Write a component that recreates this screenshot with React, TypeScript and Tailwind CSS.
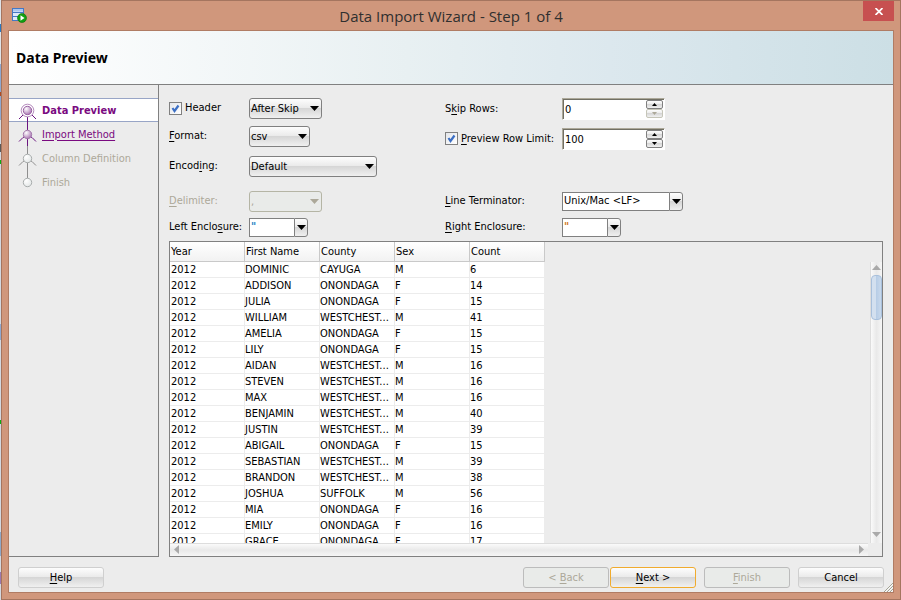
import React, { useState } from "react";

const rows: [string, string, string, string, string][] = [
  ["2012", "DOMINIC", "CAYUGA", "M", "6"],
  ["2012", "ADDISON", "ONONDAGA", "F", "14"],
  ["2012", "JULIA", "ONONDAGA", "F", "15"],
  ["2012", "WILLIAM", "WESTCHEST...", "M", "41"],
  ["2012", "AMELIA", "ONONDAGA", "F", "15"],
  ["2012", "LILY", "ONONDAGA", "F", "15"],
  ["2012", "AIDAN", "WESTCHEST...", "M", "16"],
  ["2012", "STEVEN", "WESTCHEST...", "M", "16"],
  ["2012", "MAX", "WESTCHEST...", "M", "16"],
  ["2012", "BENJAMIN", "WESTCHEST...", "M", "40"],
  ["2012", "JUSTIN", "WESTCHEST...", "M", "39"],
  ["2012", "ABIGAIL", "ONONDAGA", "F", "15"],
  ["2012", "SEBASTIAN", "WESTCHEST...", "M", "39"],
  ["2012", "BRANDON", "WESTCHEST...", "M", "38"],
  ["2012", "JOSHUA", "SUFFOLK", "M", "56"],
  ["2012", "MIA", "ONONDAGA", "F", "16"],
  ["2012", "EMILY", "ONONDAGA", "F", "16"],
  ["2012", "GRACE", "ONONDAGA", "F", "17"],
];

const glossy = "bg-[linear-gradient(to_bottom,#fdfdfd_0%,#ebebeb_45%,#d6d6d6_50%,#f0f0f0_100%)]";

/** Caption with its keyboard mnemonic underlined. */
function Mnemonic({ text, at }: { text: string; at: number }) {
  return (
    <>
      {text.slice(0, at)}
      <span className="underline underline-offset-2">{text[at]}</span>
      {text.slice(at + 1)}
    </>
  );
}

function Arrow({ up = false, small = false, className = "" }: { up?: boolean; small?: boolean; className?: string }) {
  return (
    <svg
      viewBox="0 0 9 5"
      className={`${small ? "h-[3px] w-[5px]" : "h-[5px] w-[9px]"} ${className}`}
      fill="currentColor"
      aria-hidden="true"
    >
      <path d={up ? "M0 5L4.5 0L9 5Z" : "M0 0H9L4.5 5Z"} />
    </svg>
  );
}

function Select({ id, value, width, disabled = false }: { id: string; value: string; width: string; disabled?: boolean }) {
  return (
    <span className={`relative inline-flex ${width}`}>
      <select
        id={id}
        disabled={disabled}
        defaultValue={value}
        className={`h-[21px] w-full appearance-none rounded-[3px] border pt-0.5 pr-4 pl-px opacity-100 ${
          disabled ? "border-[#b5b5a5] bg-[#e9ebe9] text-[#aca899]" : `border-[#808080] text-black ${glossy}`
        }`}
      >
        <option>{value}</option>
      </select>
      <Arrow className={`pointer-events-none absolute top-2 right-[3px] ${disabled ? "text-[#aca899]" : "text-black"}`} />
    </span>
  );
}

function Combo({ id, value, width, color = "text-black" }: { id: string; value: string; width: string; color?: string }) {
  return (
    <span className={`flex h-[19px] ${width}`}>
      <input id={id} defaultValue={value} className={`min-w-0 flex-1 border border-r-0 border-[#808080] bg-white px-px ${color}`} />
      <button type="button" aria-label="Show choices" className={`flex w-3.5 items-center justify-center rounded-r-[3px] border border-[#808080] ${glossy}`}>
        <Arrow />
      </button>
    </span>
  );
}

function Spinner({ id, initial }: { id: string; initial: number }) {
  const [value, setValue] = useState(initial);
  return (
    <span className="flex h-[22px] w-[103px] self-end border border-t-[#aca899] border-r-white border-b-white border-l-[#aca899] bg-white shadow-[inset_1px_1px_0_#716f64]">
      <input
        id={id}
        value={value}
        onChange={(e) => setValue(Number(e.target.value) || 0)}
        className="min-w-0 flex-1 bg-transparent pt-px pl-0.5"
      />
      <span className="flex w-[18px] flex-col pt-px pr-px">
        <button
          type="button"
          aria-label="Increase"
          onClick={() => setValue(value + 1)}
          className={`flex h-[9px] items-center justify-center rounded-[2px] border border-[#808080] ${glossy}`}
        >
          <Arrow up small />
        </button>
        <button
          type="button"
          aria-label="Decrease"
          disabled={value === 0}
          onClick={() => setValue(value - 1)}
          className={`flex h-[9px] items-center justify-center rounded-[2px] border border-[#808080] disabled:border-[#c5c5b8] disabled:text-[#aca899] ${glossy}`}
        >
          <Arrow small />
        </button>
      </span>
    </span>
  );
}

function Check({ id }: { id: string }) {
  return (
    <span className="relative inline-flex">
      <input
        id={id}
        type="checkbox"
        defaultChecked
        className="peer size-[13px] appearance-none border border-[#808080] bg-[linear-gradient(135deg,#e4e6ea,#ffffff)]"
      />
      <svg viewBox="0 0 13 13" className="pointer-events-none absolute inset-0 hidden size-[13px] peer-checked:block" aria-hidden="true">
        <path d="M3.5 6L5.5 9L9.5 3.5" fill="none" stroke="#3c6fc4" strokeWidth="2.2" />
      </svg>
    </span>
  );
}

function StepNode({ kind }: { kind: "current" | "next" | "later" | "last" }) {
  const purple = kind === "current" || kind === "next";
  const line = purple ? "#6b1480" : "#8e8e8e";
  return (
    <svg viewBox="0 0 22 24" className="h-6 w-[22px] shrink-0 overflow-visible" fill="none" aria-hidden="true">
      <defs>
        <radialGradient id={`node-${kind}`} cx="35%" cy="30%" r="75%">
          <stop offset="0" stopColor="#ffffff" />
          <stop offset="1" stopColor={purple ? "#a772b0" : "#e2e6e6"} />
        </radialGradient>
      </defs>
      {kind === "current" && (
        <>
          <path d="M10.5 19V32M6.5 16.5L2 21M14.5 16.5L19 21" stroke={line} />
          <circle cx="10.5" cy="12.5" r="6.3" fill="#ffffff" stroke="#b58bbd" />
        </>
      )}
      {kind === "next" && (
        <>
          <path d="M10.5 16V24M8 14.5L6 15.5L2 19.5M13 14.5L15 15.5L19 19.5" stroke={line} />
          <path d="M10.5 24V32" stroke="#8e8e8e" />
        </>
      )}
      {kind === "later" && <path d="M10.5 16V32M8 14.5L6 15.5L2 19.5M13 14.5L15 15.5L19 19.5" stroke={line} />}
      <circle
        cx="10.5"
        cy="12.5"
        r="4.2"
        fill={`url(#node-${kind})`}
        stroke={kind === "current" ? "#9a62a4" : purple ? "#a57bad" : "#a9adad"}
      />
    </svg>
  );
}

function WizardButton({ children, look = "normal" }: { children: React.ReactNode; look?: "normal" | "default" | "disabled" }) {
  const style =
    look === "disabled"
      ? "border-[#bcbcbc] bg-[#e9ebe9] text-[#aca899]"
      : look === "default"
        ? `border-[#f0ab2e] ${glossy}`
        : `border-[#cfcfcf] ${glossy}`;
  return (
    <button type="button" disabled={look === "disabled"} className={`h-[21px] w-[86px] rounded-[3px] border ${style}`}>
      {children}
    </button>
  );
}

function SideStrip() {
  return (
    <div className="flex w-px shrink-0 flex-col bg-[#d3d8e0]" aria-hidden="true">
      <i className="h-6 bg-[#dfe3e8]" />
      <i className="h-2 bg-[#2a78c0]" />
      <i className="h-8 bg-[#dfe3e8]" />
      <i className="h-7 bg-[#8fa8d0]" />
      <i className="h-1 bg-[#b04a20]" />
      <i className="h-6 bg-[#8fa8d0]" />
      <i className="mt-6 h-2 bg-[#5a5a5a]" />
      <i className="mt-2 h-1 bg-[#0fb00f]" />
      <i className="mt-40 h-4 bg-[#8fa8d0]" />
      <i className="mt-20 h-1 bg-[#0fb00f]" />
      <i className="mt-auto mb-4 h-6 bg-[#8fa8c8]" />
      <i className="mb-4 h-3 bg-[#9b78b0]" />
    </div>
  );
}

export default function App() {
  return (
    <div className="flex h-screen font-['DejaVu_Sans_Condensed','DejaVu_Sans','Noto_Sans',sans-serif] text-[11px] leading-4 text-black">
      <SideStrip />
      <div className="flex min-w-0 flex-1 flex-col border border-[#a5755f] bg-[#d0977c] px-1.5 pb-1.5">
        <header className="relative flex h-[29px] shrink-0 items-center justify-center text-[#2f2f2f]">
          <svg viewBox="0 0 15 15" className="absolute top-[7px] left-1 size-[15px]" aria-hidden="true">
            <rect x="0.5" y="0.5" width="11" height="12" fill="#dce8fa" stroke="#4478c4" />
            <rect x="1" y="1" width="10" height="2.5" fill="#a9c5ef" />
            <path d="M0.5 4.5H11.5M0.5 8.5H11.5" stroke="#4478c4" />
            <circle cx="10" cy="10" r="4.5" fill="#12a012" stroke="#067006" strokeWidth="0.6" />
            <path d="M8.5 7.3V12.7L12.5 10Z" fill="#ffffff" />
          </svg>
          <h1 className="font-['Open_Sans','Noto_Sans',sans-serif] text-[15px]">Data Import Wizard - Step 1 of 4</h1>
          <button type="button" aria-label="Close" className="absolute top-0 right-0 flex h-5 w-[31px] items-center justify-center bg-[#c75050]">
            <svg viewBox="0 0 8 7" className="h-[7px] w-2" aria-hidden="true">
              <path d="M0.5 0L7.5 7M7.5 0L0.5 7" stroke="#ffffff" strokeWidth="1.7" />
            </svg>
          </button>
        </header>

        <div className="relative flex min-h-0 flex-1 flex-col border border-[#b07c64] bg-[#ececec]">
          <div className="flex h-[54px] shrink-0 items-center border-b border-[#808080] bg-[linear-gradient(to_right,#ffffff_0%,#e8f0f2_45%,#dce8ee_68%,#ccdfe5_100%)] pl-[7px]">
            <h2 className="font-['Noto_Sans','Open_Sans',sans-serif] text-[14px] font-bold">Data Preview</h2>
          </div>

          <div className="flex min-h-0 flex-1">
            <nav className="w-[150px] shrink-0 border-r border-b border-[#808080] pt-[13px]">
              <ol>
                <li className="flex h-6 items-center gap-[3px] bg-white pl-2 font-bold text-[#7a0a80] shadow-[inset_0_1px_0_#98a5c6,inset_0_-1px_0_#98a5c6]">
                  <StepNode kind="current" />
                  <span className="pt-px">Data Preview</span>
                </li>
                <li className="flex h-6 items-center gap-[3px] pl-2 text-[#7a0a80]">
                  <StepNode kind="next" />
                  <a href="#import-method" className="pt-px underline underline-offset-2">Import Method</a>
                </li>
                <li className="flex h-6 items-center gap-[3px] pl-2 text-[#aca899]">
                  <StepNode kind="later" />
                  <span className="pt-px">Column Definition</span>
                </li>
                <li className="flex h-6 items-center gap-[3px] pl-2 text-[#aca899]">
                  <StepNode kind="last" />
                  <span className="pt-px">Finish</span>
                </li>
              </ol>
            </nav>

            <main className="flex min-w-0 flex-1 flex-col pt-3 pr-2.5 pl-2.5">
              <div className="grid shrink-0 grid-cols-[276px_1fr]">
                <div>
                  <div className="grid h-[22px] grid-cols-[80px_1fr] items-center">
                    <span className="flex items-center gap-[3px]">
                      <Check id="header" />
                      <label htmlFor="header">Header</label>
                    </span>
                    <Select id="header-position" value="After Skip" width="w-[73px]" />
                  </div>
                  <div className="mt-1.5 grid h-[22px] grid-cols-[80px_1fr] items-center">
                    <label htmlFor="format"><Mnemonic text="Format:" at={0} /></label>
                    <Select id="format" value="csv" width="w-[61px]" />
                  </div>
                  <div className="mt-2 grid h-[22px] grid-cols-[80px_1fr] items-center">
                    <label htmlFor="encoding"><Mnemonic text="Encoding:" at={5} /></label>
                    <Select id="encoding" value="Default" width="w-[128px]" />
                  </div>
                </div>
                <div>
                  <div className="grid h-[23px] grid-cols-[117px_1fr] items-center">
                    <label htmlFor="skip-rows"><Mnemonic text="Skip Rows:" at={1} /></label>
                    <Spinner id="skip-rows" initial={0} />
                  </div>
                  <div className="mt-[7px] grid h-[23px] grid-cols-[117px_1fr] items-center">
                    <span className="flex items-center gap-[3px] whitespace-nowrap">
                      <Check id="limit-on" />
                      <label htmlFor="limit-on"><Mnemonic text="Preview Row Limit:" at={0} /></label>
                    </span>
                    <Spinner id="limit" initial={100} />
                  </div>
                </div>
              </div>

              <div className="mt-[13px] mb-[3px] grid shrink-0 grid-cols-[80px_196px_117px_1fr] grid-rows-[22px_22px] items-center gap-y-1 whitespace-nowrap">
                <label htmlFor="delimiter" className="text-[#aca899]"><Mnemonic text="Delimiter:" at={0} /></label>
                <Select id="delimiter" value="," width="w-[73px]" disabled />
                <label htmlFor="terminator"><Mnemonic text="Line Terminator:" at={0} /></label>
                <Combo id="terminator" value="Unix/Mac <LF>" width="w-[121px]" />
                <label htmlFor="left-enclosure"><Mnemonic text="Left Enclosure:" at={10} /></label>
                <Combo id="left-enclosure" value={'"'} width="w-[59px]" color="font-bold text-[#1b82c4]" />
                <label htmlFor="right-enclosure"><Mnemonic text="Right Enclosure:" at={0} /></label>
                <Combo id="right-enclosure" value={'"'} width="w-[59px]" color="font-bold text-[#d07818]" />
              </div>

              <section className="flex min-h-0 flex-1 flex-col border border-[#808080]" aria-label="Preview">
                <div className="flex min-h-0 flex-1">
                  <div className="min-w-0 flex-1 overflow-hidden">
                    <table className="w-[375px] table-fixed border-separate border-spacing-0 text-left whitespace-nowrap">
                      <thead>
                        <tr className="h-5">
                          {["Year", "First Name", "County", "Sex", "Count"].map((h) => (
                            <th key={h} className="border-r border-b border-[#c9c9c9] bg-[linear-gradient(to_bottom,#ffffff,#f2f2f2)] pt-px pb-0 pl-px font-normal">
                              {h}
                            </th>
                          ))}
                        </tr>
                      </thead>
                      <tbody>
                        {rows.map((r) => (
                          <tr key={r[1]} className="h-4 bg-white leading-[15px]">
                            {r.map((cell, i) => (
                              <td key={i} className="border-r border-b border-[#ececec] p-0 first:pl-px">
                                {cell}
                              </td>
                            ))}
                          </tr>
                        ))}
                      </tbody>
                    </table>
                  </div>
                  <div className="mt-5 flex w-3 shrink-0 flex-col items-center border-l border-[#dddddd] bg-[linear-gradient(to_right,#fafafa,#e9e9e9_50%,#f6f6f6)] pt-[3px] pb-1.5 text-[#a9a9a9]">
                    <Arrow up />
                    <div className="mt-[5px] h-[45px] w-[11px] rounded-[4px] border border-[#a8c0dc] bg-[linear-gradient(to_right,#d3e0ef_0%,#d3e0ef_45%,#b7cde6_50%,#c8d9ec_100%)]" />
                    <Arrow className="mt-auto" />
                  </div>
                </div>
                <div className="flex h-[13px] shrink-0">
                  <div className="flex flex-1 items-center justify-between border-t border-[#dddddd] bg-[linear-gradient(to_bottom,#fafafa,#e9e9e9_50%,#f6f6f6)] px-1 pb-0.5">
                    <svg viewBox="0 0 5 9" className="h-[9px] w-[5px]" aria-hidden="true"><path d="M5 0V9L0 4.5Z" fill="#a9a9a9" /></svg>
                    <svg viewBox="0 0 5 9" className="h-[9px] w-[5px]" aria-hidden="true"><path d="M0 0V9L5 4.5Z" fill="#a9a9a9" /></svg>
                  </div>
                  <div className="w-3.5 shrink-0" />
                </div>
              </section>
            </main>
          </div>

          <footer className="flex h-[35px] shrink-0 items-center justify-between pt-2.5 pr-[9px] pb-1 pl-[9px]">
            <WizardButton><Mnemonic text="Help" at={0} /></WizardButton>
            <div className="flex">
              <WizardButton look="disabled"><Mnemonic text="< Back" at={2} /></WizardButton>
              <span className="ml-px flex gap-2">
                <WizardButton look="default"><Mnemonic text="Next >" at={0} /></WizardButton>
                <WizardButton look="disabled"><Mnemonic text="Finish" at={0} /></WizardButton>
                <WizardButton>Cancel</WizardButton>
              </span>
            </div>
          </footer>
          <svg viewBox="0 0 9 9" className="absolute right-0 bottom-0 size-[9px]" aria-hidden="true">
            <path d="M0 9L9 0M3 9L9 3M6 9L9 6" stroke="#a3a394" />
            <path d="M1 9L9 1M4 9L9 4M7 9L9 7" stroke="#ffffff" strokeWidth="0.6" />
          </svg>
        </div>
      </div>
    </div>
  );
}
